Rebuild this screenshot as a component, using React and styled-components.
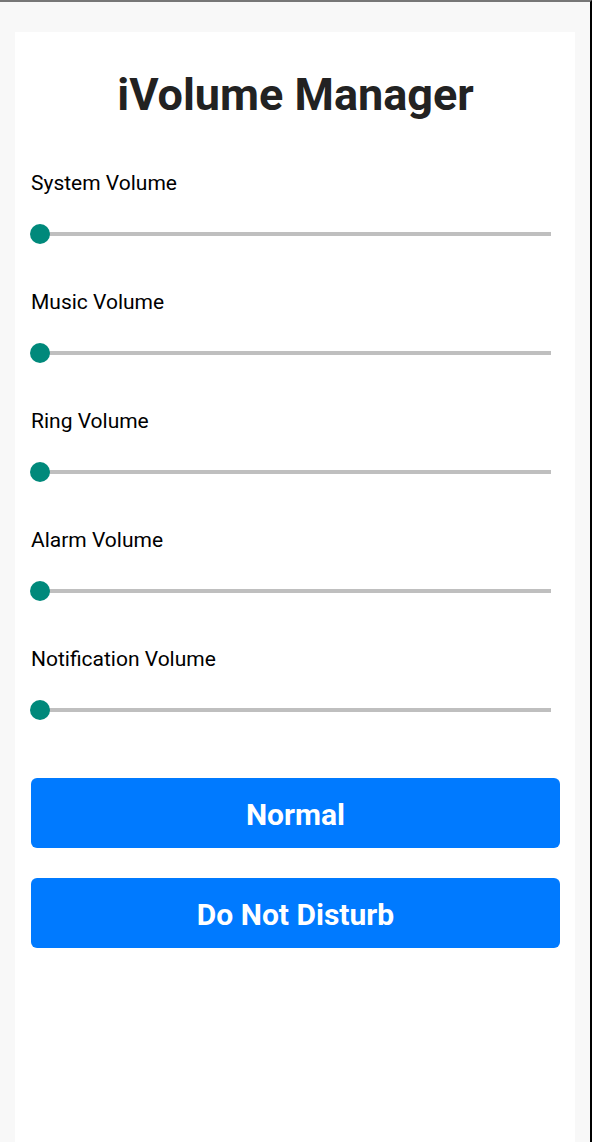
import React from "react";
import styled, { createGlobalStyle } from "styled-components";

const GlobalStyle = createGlobalStyle`
  html, body {
    margin: 0;
    padding: 0;
    background-color: #f8f8f8;
    font-family: Roboto, "Liberation Sans", sans-serif;
  }
`;

// outer frame with the thin window edges
const Frame = styled.div`
  box-sizing: border-box;
  height: 100vh;
  border-top: 2px solid #777;
  border-right: 2px solid #000;
  padding: 30px 15px 0 15px;
  display: flex;
`;
const Card = styled.div`
  flex: 1;
  background-color: #fff;
  padding: 24px 15px 16px 16px;
  display: flex;
  flex-direction: column;
`;
const Title = styled.h1`
  margin: 13px 0 0 0;
  font-size: 45px;
  line-height: 52px;
  font-weight: 700;
  color: #222;
  text-align: center;
`;
const Sections = styled.div`
  margin-top: 50px;
  display: flex;
  flex-direction: column;
  gap: 36px;
`;
const Section = styled.div`
  display: flex;
  flex-direction: column;
  gap: 19px;
`;
const Label = styled.div`
  font-size: 21px;
  line-height: 24px;
  color: #000;
`;
// slider: track with a round thumb on top
const SliderWrap = styled.div`
  position: relative;
  height: 40px;
  display: flex;
  align-items: center;
  padding: 0 9px 0 8px;
`;
const Track = styled.div`
  flex: 1;
  height: 4px;
  background-color: #bfbfbf;
`;
const Thumb = styled.div`
  position: absolute;
  left: ${({ value }) => value}%;
  top: 50%;
  width: 20px;
  height: 20px;
  margin-top: -10px;
  margin-left: -1px;
  border-radius: 50%;
  background-color: #00897b;
`;
const Buttons = styled.div`
  margin-top: 48px;
  display: flex;
  flex-direction: column;
  gap: 30px;
`;
const Button = styled.button`
  height: 70px;
  border: none;
  border-radius: 6px;
  background-color: #007aff;
  color: #fff;
  font-family: Roboto, "Liberation Sans", sans-serif;
  font-size: 30px;
  font-weight: 700;
  padding: 2px 0 0 0;
  cursor: pointer;
`;

const volumes = [
  "System Volume",
  "Music Volume",
  "Ring Volume",
  "Alarm Volume",
  "Notification Volume",
];

const Slider = ({ value }) => (
  <SliderWrap>
    <Track />
    <Thumb value={value} />
  </SliderWrap>
);

const App = () => {
  return (
    <>
      <GlobalStyle />
      <Frame>
        <Card>
          <Title>iVolume Manager</Title>
          <Sections>
            {volumes.map((name) => (
              <Section key={name}>
                <Label>{name}</Label>
                <Slider value={0} />
              </Section>
            ))}
          </Sections>
          <Buttons>
            <Button>Normal</Button>
            <Button>Do Not Disturb</Button>
          </Buttons>
        </Card>
      </Frame>
    </>
  );
};

export default App;
